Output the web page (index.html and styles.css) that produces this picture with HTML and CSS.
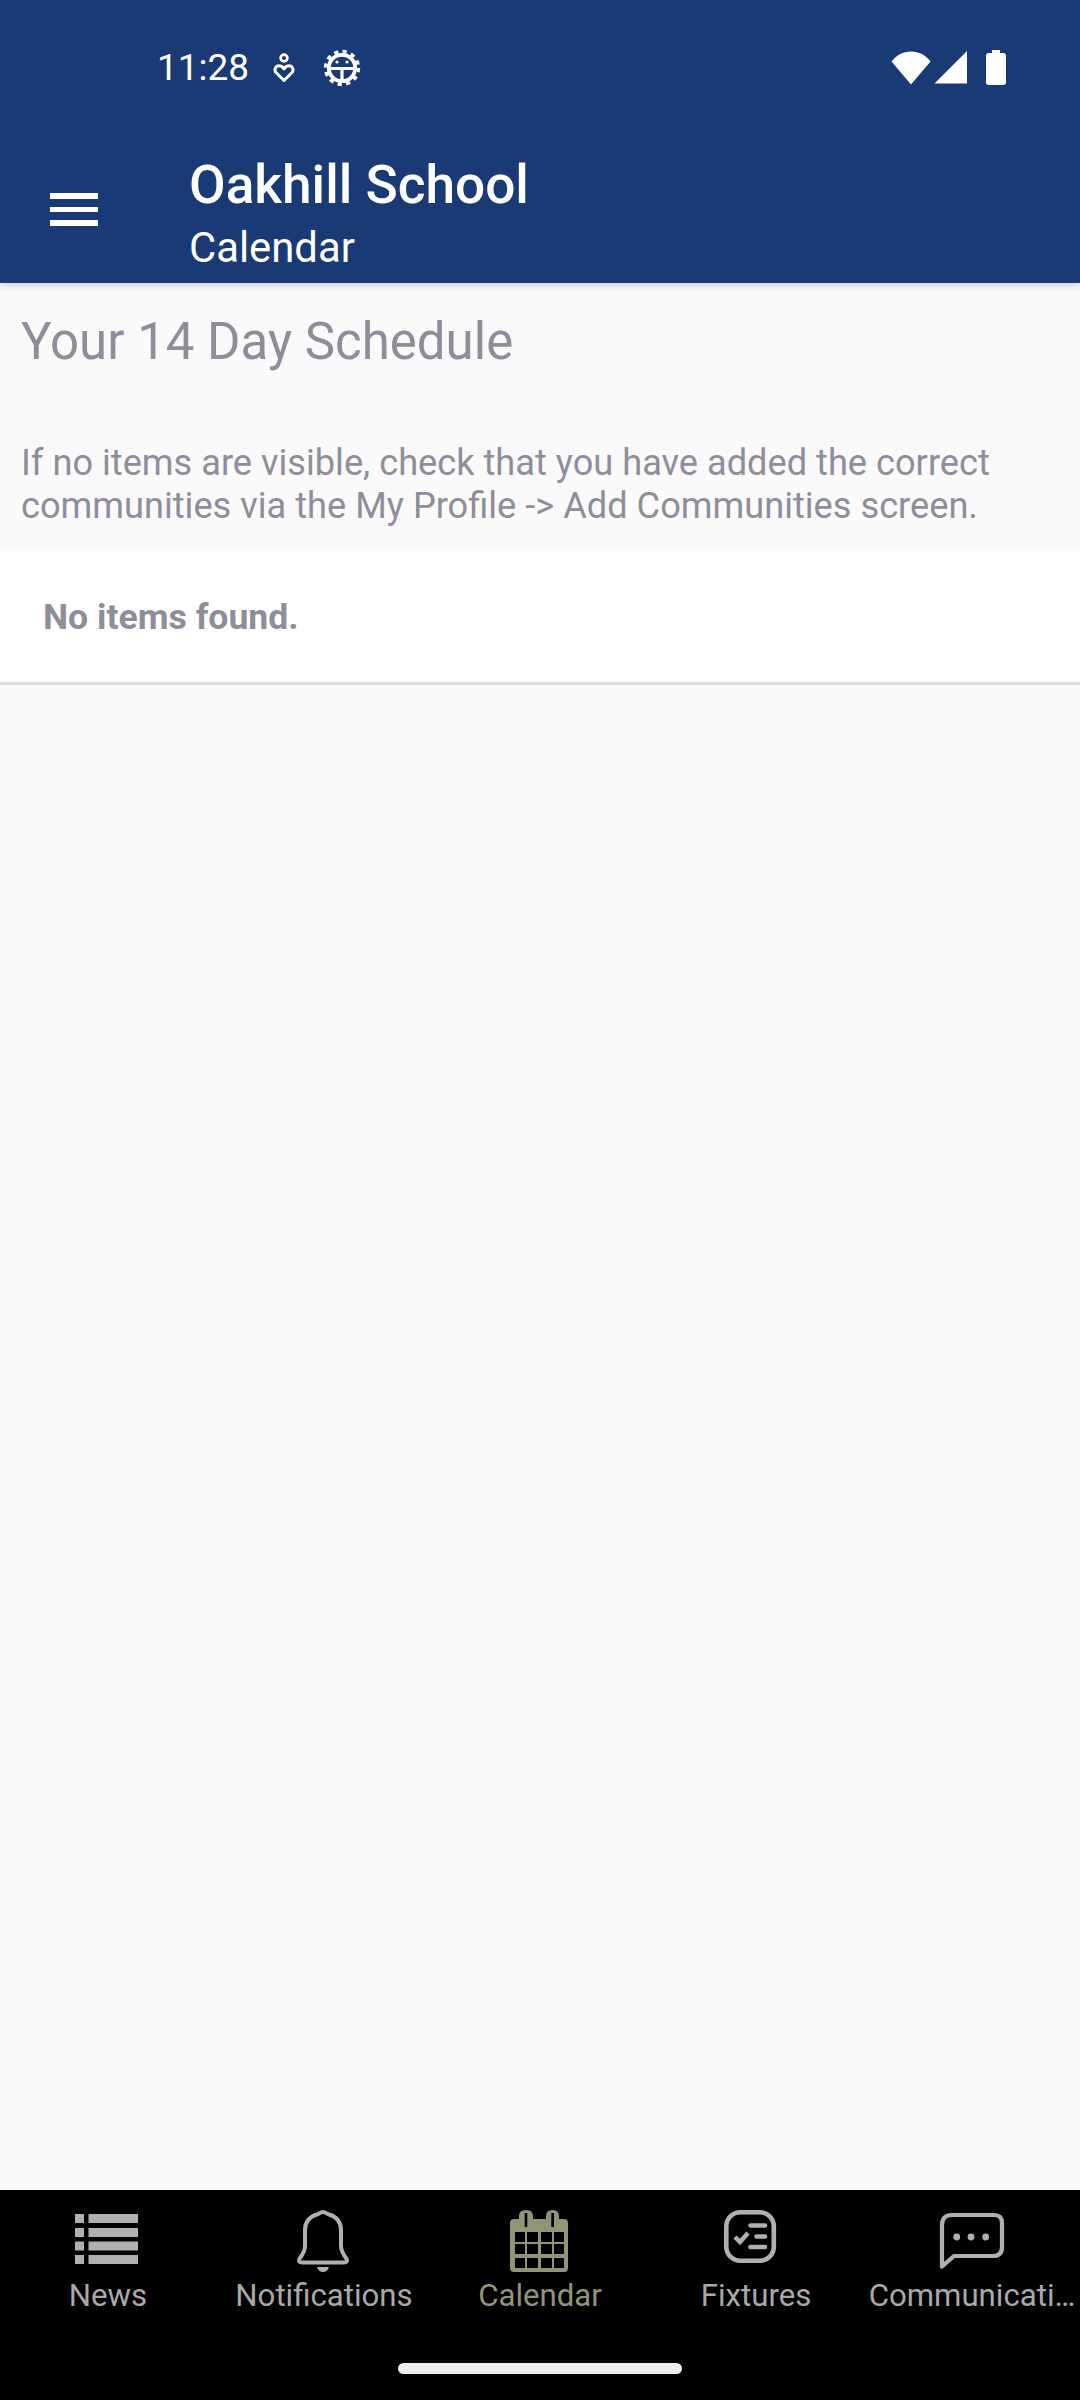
FILE: index.html
```html
<!DOCTYPE html>
<html lang="en">
<head>
    <meta charset="UTF-8">
    <meta name="viewport" content="width=device-width, initial-scale=1.0">
    <title>Calendar</title>
    <link rel="stylesheet" href="styles.css">
</head>
<body>
    <header class="app-header">
        <div class="status-bar">
            <span class="clock">11:28</span>
            <svg class="status-heart" width="22" height="30" viewBox="0 0 22 30">
                <circle cx="11" cy="5" r="3.4" fill="none" stroke="#fff" stroke-width="2.6"/>
                <path d="M11 27.5 3.2 19.8C.6 17 2.6 12.8 6 12.8c2.2 0 3.8 1.2 5 3 1.2-1.8 2.8-3 5-3 3.4 0 5.4 4.2 2.8 7z" fill="none" stroke="#fff" stroke-width="3" stroke-linejoin="round"/>
            </svg>
            <svg class="status-gear" width="38" height="38" viewBox="0 0 38 38">
                <circle cx="19" cy="19" r="16.4" fill="none" stroke="#fff" stroke-width="3.6" stroke-dasharray="4.2 4.4"/>
                <circle cx="19" cy="19" r="13.2" fill="none" stroke="#fff" stroke-width="3.8"/>
                <path d="M6 19.5H32M19 19.5V32" fill="none" stroke="#fff" stroke-width="3.2"/>
                <circle cx="14" cy="13" r="1.6" fill="#fff"/>
                <circle cx="24" cy="13" r="1.6" fill="#fff"/>
            </svg>
            <div class="status-right">
                <svg width="40" height="34" viewBox="0 0 40 34">
                    <path d="M20 33.5 .5 10.5C5.5 4 12 .5 20 .5S34.5 4 39.5 10.5z" fill="#fff"/>
                </svg>
                <svg width="34" height="33" viewBox="0 0 34 33">
                    <path d="M33 0V32.5H.5z" fill="#fff"/>
                </svg>
                <svg class="status-battery" width="20" height="35" viewBox="0 0 20 35">
                    <path d="M6 0h8v3h3.5Q20 3 20 5.5V32.5Q20 35 17.5 35H2.5Q0 35 0 32.5V5.5Q0 3 2.5 3H6z" fill="#fff"/>
                </svg>
            </div>
        </div>
        <div class="toolbar">
            <div class="menu-btn">
                <span></span>
                <span></span>
                <span></span>
            </div>
            <div class="toolbar-titles">
                <h1>Oakhill School</h1>
                <p>Calendar</p>
            </div>
        </div>
    </header>

    <main>
        <div class="intro">
            <h2>Your 14 Day Schedule</h2>
            <p>If no items are visible, check that you have added the correct communities via the My Profile -&gt; Add Communities screen.</p>
        </div>
        <div class="empty-row">No items found.</div>
    </main>

    <footer class="tabbar">
        <div class="tabs">
            <div class="tab">
                <svg width="72" height="64" viewBox="0 0 72 64" fill="#b0b0b0">
                    <rect x="3" y="4" width="9" height="9"/><rect x="16.5" y="4" width="49.5" height="9"/>
                    <rect x="3" y="18" width="9" height="9"/><rect x="16.5" y="18" width="49.5" height="9"/>
                    <rect x="3" y="31.5" width="9" height="9"/><rect x="16.5" y="31.5" width="49.5" height="9"/>
                    <rect x="3" y="45" width="9" height="9"/><rect x="16.5" y="45" width="49.5" height="9"/>
                </svg>
                <span>News</span>
            </div>
            <div class="tab">
                <svg width="72" height="64" viewBox="0 0 72 64">
                    <path d="M35 2C37.5 2 39 4 41 4.5 48 6 53 12 53 20V36C53 41 55 44 58 48 60 51 58.5 52.5 56 52.5H14C11.5 52.5 10 51 12 48 15 44 17 41 17 36V20C17 12 22 6 29 4.5 31 4 32.5 2 35 2Z" fill="none" stroke="#b0b0b0" stroke-width="4"/>
                    <path d="M29 57H41C40 60 38 62 35 62 32 62 30 60 29 57Z" fill="#b0b0b0"/>
                </svg>
                <span>Notifications</span>
            </div>
            <div class="tab active">
                <svg width="72" height="64" viewBox="0 0 72 64">
                    <path fill-rule="evenodd" d="M6 13Q6 9 10 9H15V6Q15 0 22 0 29 0 29 6V9H42V6Q42 0 48.5 0 55 0 55 6V9H60Q64 9 64 13V58Q64 62 60 62H10Q6 62 6 58Z M20.7 3V17H23.3V3Z M47.3 3V17H50V3Z M11 22V32H21V22Z M23 22V32H34V22Z M37 22V32H48V22Z M50 22V32H60V22Z M11 34V44H21V34Z M23 34V44H34V34Z M37 34V44H48V34Z M50 34V44H60V34Z M11 48V58H21V48Z M23 48V58H34V48Z M37 48V58H48V48Z M50 48V58H60V48Z" fill="#8f9677"/>
                </svg>
                <span>Calendar</span>
            </div>
            <div class="tab">
                <svg width="72" height="64" viewBox="0 0 72 64" fill="none" stroke="#b0b0b0">
                    <rect x="6.3" y="2.3" width="47.5" height="48.5" rx="14" stroke-width="4.6"/>
                    <path d="M15 27 20 32 28 23" stroke-width="4.5"/>
                    <path d="M30.5 15.5H45M36.5 26.5H45M30.5 37H45" stroke-width="4.6" stroke-linecap="round"/>
                </svg>
                <span>Fixtures</span>
            </div>
            <div class="tab">
                <svg width="72" height="64" viewBox="0 0 72 64">
                    <path d="M6 56.5V15Q6 5 16 5H58Q66 5 66 13V37Q66 46 57 46H18Z" fill="none" stroke="#b0b0b0" stroke-width="4.2" stroke-linejoin="round"/>
                    <circle cx="20.7" cy="27" r="3.4" fill="#b0b0b0"/>
                    <circle cx="35" cy="27" r="3.4" fill="#b0b0b0"/>
                    <circle cx="49.7" cy="27" r="3.4" fill="#b0b0b0"/>
                </svg>
                <span>Communicati…</span>
            </div>
        </div>
        <div class="home-indicator"></div>
    </footer>
</body>
</html>
```

FILE: styles.css
```css
* {
    box-sizing: border-box;
}

body {
    display: flex;
    flex-direction: column;
    width: 1080px;
    height: 2400px;
    margin: 0;
    background-color: #fafafa;
    font-family: Roboto, "Liberation Sans", sans-serif;
    overflow: hidden;
}

.app-header {
    height: 283px;
    background-color: #1a3a75;
    color: white;
    box-shadow: 0 2px 8px rgba(0, 0, 0, 0.2);
}

.status-bar {
    display: flex;
    align-items: center;
    height: 90px;
    padding: 45px 74px 0 157px;
}

.clock {
    font-size: 37px;
    line-height: 1;
}

.status-heart {
    margin-left: 24px;
}

.status-gear {
    margin-left: 28px;
}

.status-right {
    display: flex;
    align-items: center;
    gap: 3px;
    margin-left: auto;
}

.status-battery {
    margin-left: 15px;
}

.toolbar {
    display: flex;
    align-items: flex-start;
}

.menu-btn {
    display: flex;
    flex-direction: column;
    gap: 8px;
    width: 48px;
    margin: 103px 0 0 50px;
}

.menu-btn span {
    height: 5.5px;
    background-color: white;
}

.toolbar-titles {
    margin-left: 91px;
    padding-top: 67px;
}

.toolbar-titles h1 {
    margin: 0;
    font-size: 53.2px;
    font-weight: 500;
    line-height: 56px;
}

.toolbar-titles p {
    margin: 11px 0 0;
    font-size: 41.8px;
    line-height: 48px;
}

main {
    flex-grow: 1;
}

.intro {
    height: 266px;
    padding: 29px 21px 0;
    color: #8e8e9a;
}

.intro h2 {
    margin: 0;
    font-size: 51px;
    font-weight: 400;
    line-height: 60px;
}

.intro p {
    margin: 69px 0 0;
    font-size: 36.2px;
    line-height: 43px;
}

.empty-row {
    height: 136px;
    padding: 47px 43px 0;
    background-color: white;
    border-bottom: 3px solid #dedede;
    color: #8e8e9a;
    font-size: 35.6px;
    font-weight: 700;
    line-height: 42px;
}

.tabbar {
    height: 210px;
    background-color: black;
}

.tabs {
    display: flex;
    padding-top: 20px;
}

.tab {
    display: flex;
    flex-direction: column;
    align-items: center;
    width: 216px;
    color: #a9a9a9;
}

.tab svg {
    display: block;
}

.tab span {
    margin-top: 2px;
    font-size: 31.2px;
    line-height: 40px;
    white-space: nowrap;
}

.tab.active {
    color: #8f9677;
}

.home-indicator {
    width: 284px;
    height: 11px;
    margin: 47px auto 0;
    border-radius: 6px;
    background-color: #eeeeee;
}
```
